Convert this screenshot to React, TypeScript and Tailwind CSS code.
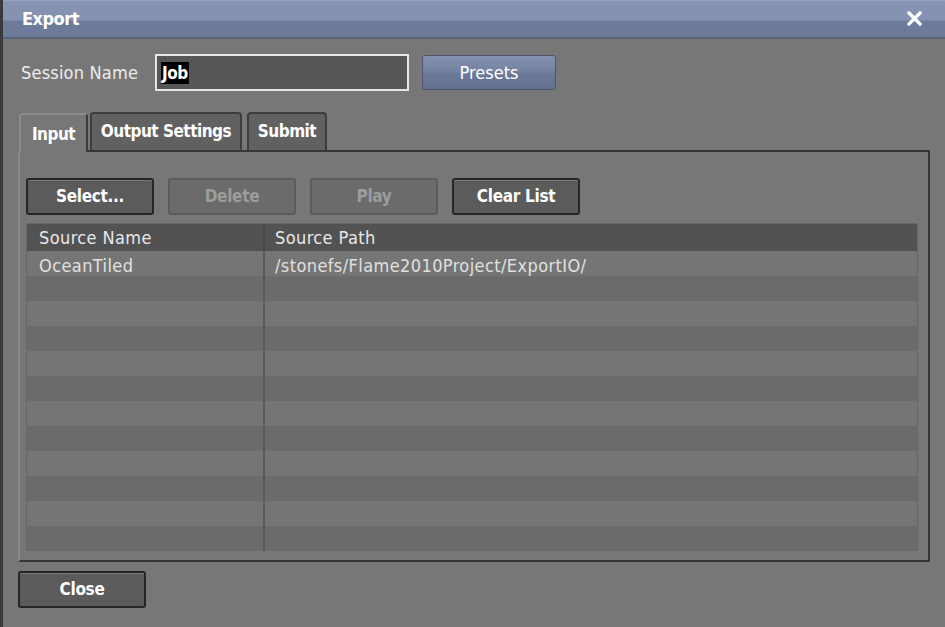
import React from "react";

const font = { fontFamily: '"DejaVu Sans Condensed", "Liberation Sans Narrow", "Open Sans", sans-serif' };

function Btn({ label, disabled, className = "" }: { label: string; disabled?: boolean; className?: string }) {
  return (
    <div
      className={
        "flex h-[37px] w-[128px] items-center justify-center rounded-[3px] border-2 text-[17px] font-bold tracking-[-0.3px] " +
        (disabled
          ? "border-[#5c5c5c] bg-[#6b6b6b] text-[#9c9c9c]"
          : "border-[#262626] bg-[#5b5b5b] text-white shadow-[inset_0_1px_0_#7a7a7a]") +
        " " +
        className
      }
    >
      {label}
    </div>
  );
}

const rows = Array.from({ length: 12 }, (_, i) => i);

export default function App() {
  return (
    <div className="h-[627px] w-[945px] overflow-hidden border-l-[3px] border-[#3a3a3a] bg-[#777777]" style={font}>
      {/* title bar */}
      <div className="flex h-[39px] items-center justify-between border-b-2 border-[#5a6278] bg-[linear-gradient(#9aa6c2_0px,#8592b1_2px,#8592b1_20px,#6d7b9a_21px,#6d7b9a_100%)] pl-[19px] pr-[23px]">
        <span className="text-[18px] font-bold tracking-[-0.5px] text-white">Export</span>
        <svg width="15" height="15" viewBox="0 0 15 15">
          <path d="M2 2 L13 13 M13 2 L2 13" stroke="white" strokeWidth="3.2" strokeLinecap="square" />
        </svg>
      </div>

      {/* session row */}
      <div className="mt-[15px] flex items-center pl-[18px]">
        <span className="w-[134px] text-[18px] tracking-[0.2px] text-[#ececec]">Session Name</span>
        <div className="flex h-[37px] w-[254px] items-center border-2 border-[#e6e6e6] bg-[#565656] pl-[4px]">
          <span className="bg-black px-[1px] text-[17px] font-bold leading-[22px] tracking-[-0.5px] text-white">Job</span>
        </div>
        <div className="ml-[13px] flex h-[35px] w-[134px] items-center justify-center rounded-[3px] border border-[#4d566b] bg-[linear-gradient(#8592b1,#7483a3_45%,#6a7897_55%,#63708e)] text-[18px] text-white">
          Presets
        </div>
      </div>

      {/* tabs */}
      <div className="mt-[21px] flex items-end pl-[16px]">
        <div className="relative z-10 -mb-[2px] flex h-[39px] w-[69px] items-center justify-center rounded-t-[4px] border-l-2 border-r-2 border-t-2 border-[#8a8a8a] border-r-[#3a3a3a] bg-[#777777] pt-[2px] text-[17px] font-bold tracking-[-0.5px] text-white">
          Input
        </div>
        <div className="ml-[2px] flex h-[38px] w-[152px] items-center justify-center rounded-t-[4px] border-2 border-b-0 border-[#3d3d3d] bg-[#616161] text-[17px] font-bold tracking-[-0.5px] text-white">
          Output Settings
        </div>
        <div className="ml-[5px] flex h-[38px] w-[80px] items-center justify-center rounded-t-[4px] border-2 border-b-0 border-[#3d3d3d] bg-[#616161] text-[17px] font-bold tracking-[-0.5px] text-white">
          Submit
        </div>
      </div>

      {/* panel */}
      <div className="ml-[15px] mr-[15px] h-[412px] border-2 border-[#373737] border-l-[#8a8a8a] bg-[#777777] px-[6px] pt-[26px]">
        <div className="flex gap-[14px]">
          <Btn label="Select..." />
          <Btn label="Delete" disabled />
          <Btn label="Play" disabled />
          <Btn label="Clear List" />
        </div>

        <div className="mt-[8px] h-[328px] w-[892px] border border-[#666] bg-[#6b6b6b]">
          <div className="flex h-[27px] bg-[#525252] text-[18px] tracking-[0.4px] text-[#e8e8e8]">
            <div className="w-[238px] border-r-2 border-[#464646] pl-[12px] leading-[28px]">Source Name</div>
            <div className="pl-[10px] leading-[28px]">Source Path</div>
          </div>
          {rows.map((i) => (
            <div key={i} className={"flex h-[25px] text-[18px] tracking-[0.4px] text-[#e0e0e0] " + (i % 2 === 0 ? "bg-[#757575]" : "bg-[#6b6b6b]")}>
              <div className="w-[238px] border-r-2 border-[#5a5a5a] pl-[12px] pt-[2px] leading-[25px]">{i === 0 ? "OceanTiled" : ""}</div>
              <div className="pl-[10px] pt-[2px] leading-[25px]">{i === 0 ? "/stonefs/Flame2010Project/ExportIO/" : ""}</div>
            </div>
          ))}
        </div>
      </div>

      <div className="mt-[9px] pl-[15px]">
        <Btn label="Close" />
      </div>
    </div>
  );
}
